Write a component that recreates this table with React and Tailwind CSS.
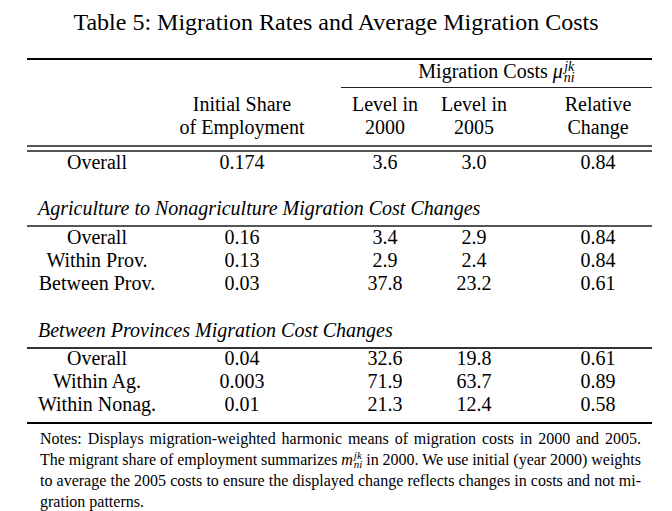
import React from "react";

function Row({ c }) {
  return (
    <div className="flex h-[23px] leading-[23px] whitespace-nowrap">
      <div className="w-[140px] text-center">{c[0]}</div>
      <div className="w-[150px] text-center">{c[1]}</div>
      <div className="w-[24px]" />
      <div className="w-[88px] text-center">{c[2]}</div>
      <div className="w-[90px] text-center">{c[3]}</div>
      <div className="w-[25px]" />
      <div className="w-[108px] text-center">{c[4]}</div>
    </div>
  );
}

function SupSub({ sup, sub, size, lh, raise }) {
  return (
    <span className={`inline-flex flex-col italic ${size} ${lh} ${raise} ml-[1px]`}>
      <span>{sup}</span>
      <span>{sub}</span>
    </span>
  );
}

export default function App() {
  return (
    <div className="w-[672px] h-[511px] bg-white text-black font-['Liberation_Serif','Times_New_Roman',serif] overflow-hidden">
      <div className="mt-[7px] h-[30px] leading-[30px] text-[24px] text-center whitespace-nowrap">
        Table 5: Migration Rates and Average Migration Costs
      </div>

      <div className="ml-[27px] w-[625px] text-[20px]">
        <div className="mt-[21px] h-[2px] bg-black" />
        <div className="flex h-[23px] leading-[23px]">
          <div className="w-[314px]" />
          <div className="w-[311px] text-center whitespace-nowrap">
            Migration Costs <span className="italic">μ</span>
            <SupSub sup="jk" sub="ni" size="text-[14px]" lh="leading-[11px]" raise="align-[7px]" />
          </div>
        </div>
        <div className="flex mt-[4px]">
          <div className="w-[314px]" />
          <div className="w-[311px] h-px bg-[#222]" />
        </div>
        <div className="mt-[5px]">
          <Row c={["", "Initial Share", "Level in", "Level in", "Relative"]} />
          <Row c={["", "of Employment", "2000", "2005", "Change"]} />
        </div>
        <div className="mt-[6px] h-[2px] bg-[#555]" />
        <div className="mt-[3px] h-[2px] bg-[#555]" />
        <div className="-mt-[1px]">
          <Row c={["Overall", "0.174", "3.6", "3.0", "0.84"]} />
        </div>

        <div className="mt-[23px] h-[23px] leading-[23px] pl-[11px] italic whitespace-nowrap">
          Agriculture to Nonagriculture Migration Cost Changes
        </div>
        <div className="mt-[5px] h-[2px] bg-[#555]" />
        <div className="-mt-[1px]">
          <Row c={["Overall", "0.16", "3.4", "2.9", "0.84"]} />
          <Row c={["Within Prov.", "0.13", "2.9", "2.4", "0.84"]} />
          <Row c={["Between Prov.", "0.03", "37.8", "23.2", "0.61"]} />
        </div>

        <div className="mt-[24px] h-[23px] leading-[23px] pl-[11px] italic whitespace-nowrap">
          Between Provinces Migration Cost Changes
        </div>
        <div className="mt-[5px] h-[2px] bg-[#333]" />
        <div className="-mt-[2px]">
          <Row c={["Overall", "0.04", "32.6", "19.8", "0.61"]} />
          <Row c={["Within Ag.", "0.003", "71.9", "63.7", "0.89"]} />
          <Row c={["Within Nonag.", "0.01", "21.3", "12.4", "0.58"]} />
        </div>
        <div className="mt-[6px] h-[2px] bg-black" />
      </div>

      <div className="ml-[40px] w-[601px] mt-[4px] text-[16px] leading-[21px] [word-spacing:-1px]">
        <div className="h-[21px] text-justify [text-align-last:justify] whitespace-nowrap">
          Notes: Displays migration-weighted harmonic means of migration costs in 2000 and 2005.
        </div>
        <div className="h-[21px] text-justify [text-align-last:justify] whitespace-nowrap">
          The migrant share of employment summarizes <span className="italic">m</span>
          <SupSub sup="jk" sub="ni" size="text-[11px]" lh="leading-[9px]" raise="align-[6px]" /> in 2000. We use initial (year 2000) weights
        </div>
        <div className="h-[21px] text-justify [text-align-last:justify] whitespace-nowrap">
          to average the 2005 costs to ensure the displayed change reflects changes in costs and not mi-
        </div>
        <div className="h-[21px] whitespace-nowrap [word-spacing:0px]">gration patterns.</div>
      </div>
    </div>
  );
}
